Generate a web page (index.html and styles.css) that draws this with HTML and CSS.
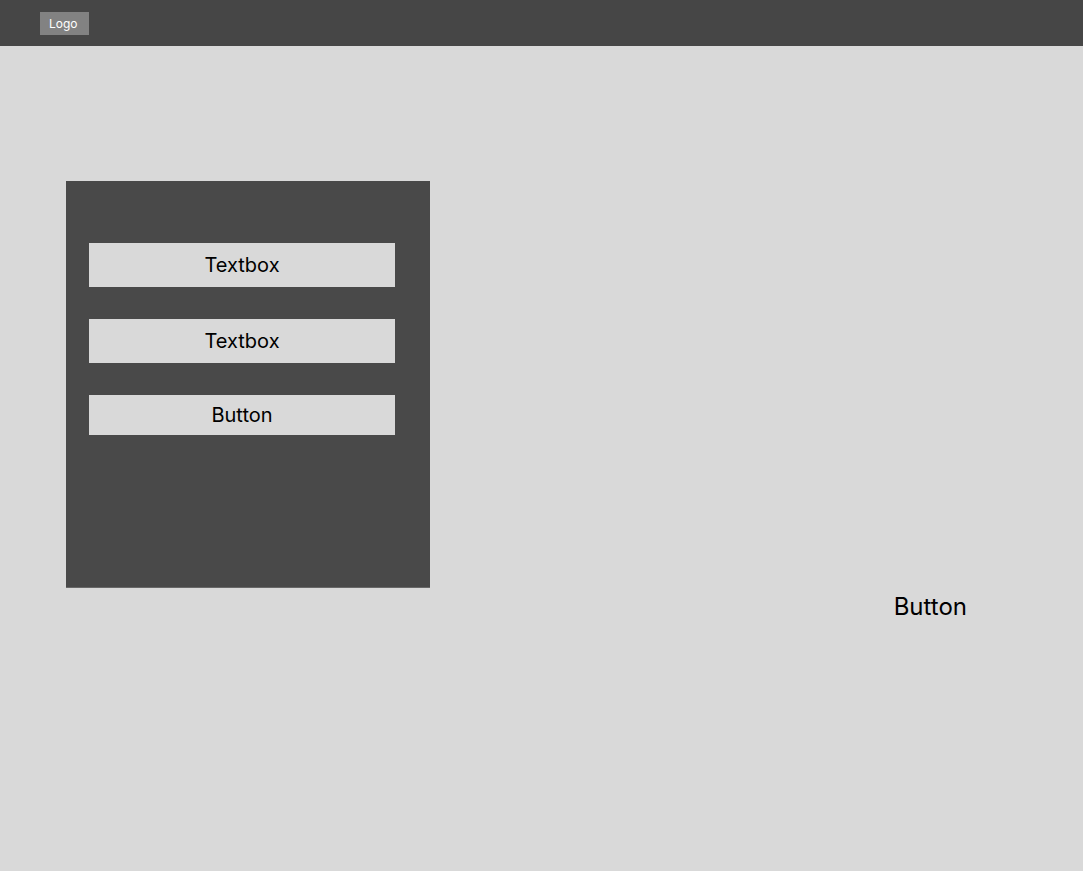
FILE: index.html
```html
<!DOCTYPE html>
<html lang="en">
<head>
<meta charset="utf-8">
<meta name="viewport" content="width=device-width, initial-scale=1">
<title>Wireframe</title>
<link rel="stylesheet" href="styles.css">
</head>
<body>
<header class="topbar"><a class="logo" href="#">Logo</a></header>
<main class="main">
<form class="panel">
<input class="field" type="text" placeholder="Textbox" aria-label="Textbox 1">
<input class="field" type="text" placeholder="Textbox" aria-label="Textbox 2">
<button class="submit" type="button">Button</button>
</form>
<button class="action" type="button">Button</button>
</main>
</body>
</html>
```
FILE: styles.css
```css
* {
  box-sizing: border-box;
}

body {
  margin: 0;
  min-height: 100vh;
  background: #d9d9d9;
  color: #000;
  font-family: Inter, "Liberation Sans", sans-serif;
  font-optical-sizing: none;
}

.topbar {
  display: flex;
  padding: 12px 40px 11px;
  background: #464646;
}

.logo {
  padding: 4px 11px 4px 9px;
  background: #828282;
  color: #fff;
  font-size: 12px;
  line-height: 15px;
  text-decoration: none;
}

.main {
  display: flex;
  justify-content: space-between;
  align-items: flex-start;
  padding: 135px 116px 0 66px;
}

.panel {
  display: flex;
  flex-direction: column;
  gap: 32px;
  flex: 0 1 364px;
  padding: 62px 35px 152px 23px;
  background: #494949;
  border-bottom: 1px solid #686868;
}

.field,
.submit {
  width: 100%;
  padding: 10px;
  border: 0;
  border-radius: 0;
  background: #d9d9d9;
  color: #000;
  font-family: inherit;
  font-optical-sizing: inherit;
  font-size: 20px;
  line-height: 24px;
  text-align: center;
}

.field::placeholder {
  color: #000;
  opacity: 1;
}

.submit {
  padding: 8px 10px;
}

.action {
  margin-top: 411px;
  padding: 0;
  border: 0;
  background: transparent;
  color: #000;
  font-family: inherit;
  font-optical-sizing: inherit;
  font-size: 24px;
  line-height: 30px;
}
```
